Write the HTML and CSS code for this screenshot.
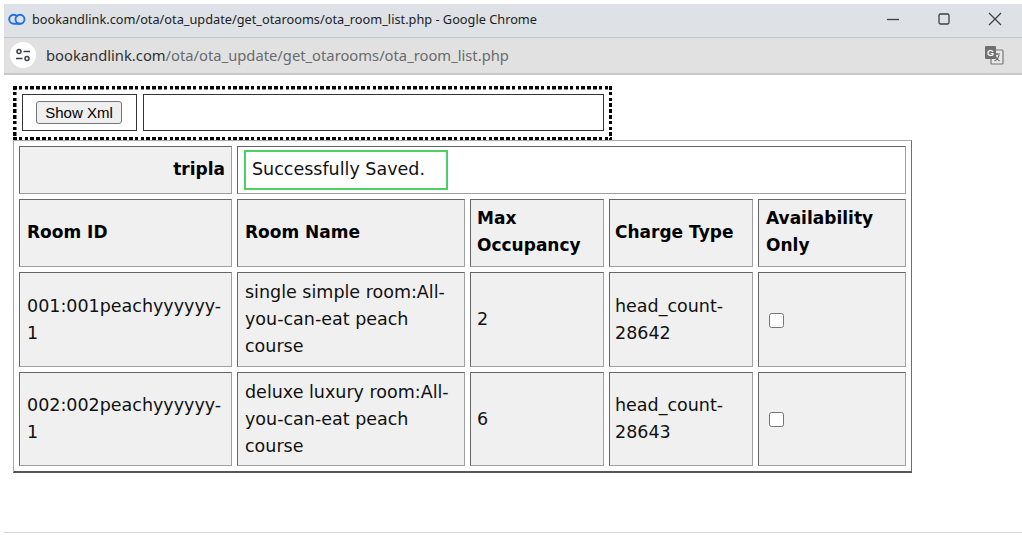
FILE: index.html
```html
<!DOCTYPE html>
<html lang="en">
<head>
<meta charset="utf-8">
<title>ota_room_list</title>
<link rel="stylesheet" href="styles.css">
</head>
<body>
<div class="window">
  <header class="titlebar">
    <svg class="favicon" width="18" height="12" viewBox="0 0 18 12"><g fill="none" stroke="#1a73e8" stroke-width="1.900"><path d="M9.500 3.900C8.700 2.500 7.300 1.800 6 1.800 3.400 1.800 1.200 3.600 1.200 6.300s2.200 4.500 4.800 4.500h6"/><circle cx="12" cy="6.300" r="4.500"/></g></svg>
    <span class="title">bookandlink.com/ota/ota_update/get_otarooms/ota_room_list.php - Google Chrome</span>
    <div class="controls">
      <svg width="14" height="14" viewBox="0 0 14 14"><path d="M1 7.500h12" stroke="#3c4043" stroke-width="1.300"/></svg>
      <svg width="14" height="14" viewBox="0 0 14 14"><rect x="2" y="2" width="10" height="10" rx="1.500" fill="none" stroke="#3c4043" stroke-width="1.300"/></svg>
      <svg width="14" height="14" viewBox="0 0 14 14"><path d="M1 1l12 12M13 1L1 13" stroke="#3c4043" stroke-width="1.200"/></svg>
    </div>
  </header>
  <div class="addressbar">
    <span class="site-icon">
      <svg width="16" height="14" viewBox="0 0 16 14"><g fill="none" stroke="#3c4043" stroke-width="1.500"><circle cx="4" cy="3.500" r="2"/><path d="M8.500 3.500h6.500M1 10.500h6.500"/><circle cx="12" cy="10.500" r="2"/></g></svg>
    </span>
    <span class="url"><span class="host">bookandlink.com</span>/ota/ota_update/get_otarooms/ota_room_list.php</span>
    <svg class="translate" width="20" height="20" viewBox="0 0 20 20"><rect x="7" y="5" width="12" height="14" rx="1" fill="#e8e8e8" stroke="#777" stroke-width="1.200"/><path d="M10 9h6M13 8v2M15 10c-.5 3-2.500 5-4.500 6M11.500 11.500c1 2 2.500 3.500 4 4.500" fill="none" stroke="#666" stroke-width="1.100"/><rect x="1" y="1" width="11" height="13" rx="1" fill="#6f6f6f"/><text class="translate-g" x="3" y="11">G</text></svg>
  </div>
  <main class="page">
    <div class="toolbox">
      <div class="tools">
        <div class="tool-btn"><button class="show-xml" type="button">Show Xml</button></div>
        <div class="tool-out"></div>
      </div>
    </div>
    <table class="rooms">
      <colgroup><col class="c1"><col class="c2"><col class="c3"><col class="c4"><col class="c5"></colgroup>
      <tr class="r-head">
        <th class="hotel">tripla</th>
        <td class="status-cell" colspan="4"><div class="status">Successfully Saved.</div></td>
      </tr>
      <tr class="r-cols">
        <th>Room ID</th><th>Room Name</th><th class="tight">Max Occupancy</th><th class="tighter">Charge Type</th><th>Availability Only</th>
      </tr>
      <tr class="r-first">
        <td>001:001peachyyyyyy-1</td><td>single simple room:All-you-can-eat peach course</td><td class="tight">2</td><td class="tighter">head_count-28642</td><td><input class="check" type="checkbox"></td>
      </tr>
      <tr class="r-room">
        <td>002:002peachyyyyyy-1</td><td>deluxe luxury room:All-you-can-eat peach course</td><td class="tight">6</td><td class="tighter">head_count-28643</td><td><input class="check" type="checkbox"></td>
      </tr>
    </table>
  </main>
</div>
</body>
</html>
```
FILE: styles.css
```css
* { box-sizing: border-box; }
html, body { margin: 0; height: 535px; overflow: hidden; background: #fff; }
.window { height: 533px; margin-left: 4px; padding-top: 4px; border-bottom: 1px solid #d4d4d4; font-family: "DejaVu Sans", sans-serif; }
.titlebar { height: 34px; background: #dee1e6; display: flex; align-items: center; padding: 0 0 3px 4px; border-bottom: 1px solid #c4c6ca; }
.favicon { margin-right: 6px; }
.title { font: 12.75px/16px "Noto Sans", sans-serif; color: #202124; }
.controls { margin-left: auto; display: flex; gap: 37px; padding-right: 20px; align-items: center; }
.addressbar { height: 37px; background: #e1e1e1; border-bottom: 2px solid #c8c8c8; display: flex; align-items: center; padding: 0 0 2px 6px; }
.site-icon { width: 26px; height: 26px; border-radius: 50%; background: #fff; display: flex; align-items: center; justify-content: center; margin-right: 10px; }
.url { font: 14.75px/18px "Noto Sans", sans-serif; color: #6a6b6d; }
.host { color: #303134; }
.translate { margin-left: auto; margin-right: 18px; }
.translate-g { font: bold 9px "Liberation Sans", sans-serif; fill: #fff; }
.page { padding: 11px 0 0 9px; }
.toolbox {
  width: 599px; height: 54px; padding: 8px 8px 9px 9px;
  background:
    repeating-linear-gradient(90deg, #000 0 3.500px, transparent 3.500px 5.800px) left top / 100% 3.500px no-repeat,
    repeating-linear-gradient(90deg, #000 0 3.500px, transparent 3.500px 5.800px) left bottom / 100% 3.500px no-repeat,
    repeating-linear-gradient(180deg, #000 0 3.500px, transparent 3.500px 5.800px) left top / 3.500px 100% no-repeat,
    repeating-linear-gradient(180deg, #000 0 3.500px, transparent 3.500px 5.800px) right top / 3.500px 100% no-repeat;
}
.tools { display: flex; gap: 6px; height: 37px; }
.tool-btn { width: 115px; border: 1px solid #333; display: flex; align-items: center; padding-left: 13px; }
.tool-out { flex: 1; border: 1px solid #333; }
.show-xml { width: 86px; height: 23px; padding: 0; font: 15px "Liberation Sans", sans-serif; color: #000; background: #efefef; border: 1px solid #767676; border-radius: 3px; }
.rooms { width: 899px; border-collapse: separate; border-spacing: 5px; border: 1px solid; border-bottom-width: 2px; border-color: #a8a8a8 #6e6e6e #555 #a8a8a8; table-layout: fixed; font-size: 17.500px; line-height: 27px; color: #111; }
.c1 { width: 213px; } .c2 { width: 228px; } .c3 { width: 134px; } .c4 { width: 144px; } .c5 { width: 148px; }
.rooms th, .rooms td { background: #f0f0f0; border: 1px solid; border-color: #666 #a0a0a0 #a0a0a0 #666; padding: 0 6px 0 7px; text-align: left; word-wrap: break-word; }
.rooms th { font-weight: 700; font-size: 17px; color: #000; padding-bottom: 2px; }
.rooms .tight { padding-left: 6px; }
.rooms .tighter { padding-left: 5px; }
.rooms .hotel { text-align: right; }
.rooms .status-cell { background: #fff; padding: 3px 6px; }
.status { width: 204px; height: 40px; border: 2px solid #4bd163; padding: 0 6px; line-height: 35px; white-space: nowrap; }
.r-head { height: 48px; }
.r-cols { height: 68px; }
.r-first { height: 95px; }
.r-room { height: 94px; }
.check { width: 15px; height: 15px; margin: 3px 3px 3px 3px; vertical-align: middle; }
```
